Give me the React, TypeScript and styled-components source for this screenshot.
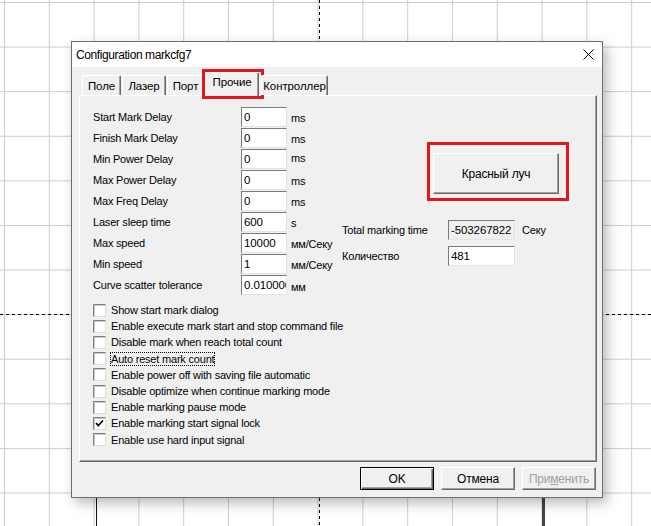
import React from "react";
import styled, { createGlobalStyle } from "styled-components";

const GlobalStyle = createGlobalStyle`
  html, body {
    margin: 0;
    padding: 0;
    background: #fff;
  }
  body {
    font-family: "Liberation Sans", Arial, sans-serif;
    font-size: 11px;
    letter-spacing: -0.2px;
    color: #000;
  }
`;

const Desktop = styled.div`
  position: relative;
  width: 651px;
  height: 526px;
  overflow: hidden;
  box-sizing: border-box;
  padding: 41px 0 0 71px;
  background-color: #fff;
  background-image: linear-gradient(to right, #cdcdcd 1px, transparent 1px),
    linear-gradient(to bottom, #cdcdcd 1px, transparent 1px);
  background-size: 44.8px 44.6px;
  background-position: 4px 2px;
`;

// guide lines drawn on the canvas behind the window
const DashV = styled.div`
  position: absolute;
  left: 319px;
  top: 0;
  width: 1px;
  height: 100%;
  background: repeating-linear-gradient(to bottom, #000 0 3px, transparent 3px 6px);
`;

const DashH = styled.div`
  position: absolute;
  left: 0;
  top: 314px;
  width: 100%;
  height: 1px;
  background: repeating-linear-gradient(to right, #000 0 3px, transparent 3px 6px);
`;

const Stroke = styled.div<{ $x: number; $w: number; $c: string }>`
  position: absolute;
  left: ${(p) => p.$x}px;
  top: 497px;
  width: ${(p) => p.$w}px;
  height: 29px;
  background: ${(p) => p.$c};
`;

const Dialog = styled.div`
  position: relative;
  z-index: 1;
  width: 532px;
  height: 457px;
  box-sizing: border-box;
  border: 1px solid #6e6e6e;
  background: #f0f0f0;
  box-shadow: 4px 5px 12px rgba(0, 0, 0, 0.28);
  display: flex;
  flex-direction: column;
`;

const TitleBar = styled.div`
  height: 25px;
  flex: none;
  background: #fff;
  display: flex;
  align-items: center;
  justify-content: space-between;
  padding: 0 8px 0 4px;
  font-size: 12px;
  letter-spacing: -0.4px;
`;

const Body = styled.div`
  flex: 1;
  display: flex;
  flex-direction: column;
  padding: 5px 5px 6px 7px;
`;

const TabStrip = styled.div`
  display: flex;
  align-items: flex-end;
  height: 23px;
  padding-left: 3px;
  position: relative;
  z-index: 2;
`;

const Tab = styled.div<{ $w: number; $active?: boolean }>`
  position: relative;
  box-sizing: border-box;
  width: ${(p) => p.$w}px;
  height: ${(p) => (p.$active ? 24 : 20)}px;
  margin-bottom: ${(p) => (p.$active ? -1 : 0)}px;
  margin-right: ${(p) => (p.$active ? 2 : 1)}px;
  background: #f0f0f0;
  border-top: 1px solid #fff;
  border-left: 1px solid #fff;
  border-right: 1px solid #696969;
  border-radius: 2px 2px 0 0;
  box-shadow: inset -1px 0 #a0a0a0;
  display: flex;
  align-items: ${(p) => (p.$active ? "flex-start" : "center")};
  padding-top: ${(p) => (p.$active ? 3 : 0)}px;
  justify-content: center;
  white-space: nowrap;
  font-size: 11.5px;
  letter-spacing: -0.1px;
`;

const TabMark = styled.div`
  position: absolute;
  left: -4px;
  right: -6px;
  top: -4px;
  bottom: -3px;
  border: 3px solid #e3161e;
  pointer-events: none;
`;

const Panel = styled.div`
  height: 367px;
  box-sizing: border-box;
  border-top: 1px solid #fff;
  border-left: 1px solid #fff;
  border-right: 1px solid #696969;
  border-bottom: 1px solid #696969;
  box-shadow: inset -1px -1px #a0a0a0;
  padding: 11px 0 0 13px;
`;

const TopSection = styled.div`
  display: flex;
`;

const FieldGrid = styled.div`
  width: 249px;
  flex: none;
  display: grid;
  grid-template-columns: 148px 46px 49px;
  grid-auto-rows: 21px;
`;

const FieldLabel = styled.div`
  align-self: center;
  white-space: nowrap;
  margin-top: -2px;
`;

const TextBox = styled.div<{ $readOnly?: boolean }>`
  height: 20px;
  box-sizing: border-box;
  border-top: 1px solid #7a7a7a;
  border-left: 1px solid #7a7a7a;
  border-right: 1px solid #e3e3e3;
  border-bottom: 1px solid #e3e3e3;
  background: ${(p) => (p.$readOnly ? "#f0f0f0" : "#fff")};
  padding: 0 0 0 2px;
  display: flex;
  align-items: center;
  overflow: hidden;
  white-space: nowrap;
  font-size: 11.5px;
  letter-spacing: -0.1px;
`;

const Unit = styled.div<{ $shift?: number }>`
  align-self: center;
  padding-left: 4px;
  white-space: nowrap;
  margin-top: ${(p) => p.$shift ?? 0}px;
`;

const RightSection = styled.div`
  display: flex;
  flex-direction: column;
`;

const RedFrame = styled.div`
  margin: 35px 0 0 85px;
  width: 142px;
  height: 59px;
  box-sizing: border-box;
  border: 3px solid #e3161e;
  padding: 8px 7px 4px 3px;
`;

const Button = styled.button<{ $w: number; $h: number; $default?: boolean }>`
  width: ${(p) => p.$w}px;
  height: ${(p) => p.$h}px;
  box-sizing: border-box;
  margin: 0;
  padding: 0;
  font-family: "Liberation Sans", Arial, sans-serif;
  font-size: 12px;
  letter-spacing: -0.2px;
  color: #000;
  background: #f0f0f0;
  border-style: solid;
  border-width: 1px;
  border-color: ${(p) => (p.$default ? "#000" : "#fff #696969 #696969 #fff")};
  box-shadow: ${(p) =>
    p.$default
      ? "inset 1px 1px #fff, inset -1px -1px #696969, inset -2px -2px #a0a0a0"
      : "inset -1px -1px #a0a0a0"};
  &:disabled {
    color: #a0a0a0;
  }
`;

const InfoGrid = styled.div`
  margin-top: 19px;
  display: grid;
  grid-template-columns: 106px 67px auto;
  grid-auto-rows: 20px;
  row-gap: 6px;
`;

const InfoLabel = styled.div`
  align-self: center;
  white-space: nowrap;
`;

const InfoUnit = styled.div`
  align-self: center;
  padding-left: 7px;
  white-space: nowrap;
`;

const CheckList = styled.div`
  margin-top: 6px;
  display: flex;
  flex-direction: column;
`;

const CheckRow = styled.div`
  height: 16.2px;
  display: flex;
  align-items: center;
`;

const Box = styled.span`
  width: 13px;
  height: 13px;
  box-sizing: border-box;
  flex: none;
  background: #fff;
  border-top: 1px solid #808080;
  border-left: 1px solid #808080;
  border-right: 1px solid #dcdcdc;
  border-bottom: 1px solid #dcdcdc;
  box-shadow: inset 1px 1px #c8c8c8;
  display: flex;
  align-items: center;
  justify-content: center;
`;

const CheckText = styled.span<{ $focused?: boolean }>`
  margin-left: 5px;
  white-space: nowrap;
  outline: ${(p) => (p.$focused ? "1px dotted #000" : "none")};
  outline-offset: 0;
  line-height: 12px;
`;

const Footer = styled.div`
  display: flex;
  justify-content: flex-end;
  gap: 7px;
  margin-top: 5px;
  padding-right: 1px;
`;

const Accel = styled.span`
  text-decoration: underline;
`;

const fields: { label: string; value: string; unit: string; shift?: number }[] = [
  { label: "Start Mark Delay", value: "0", unit: "ms", shift: 1 },
  { label: "Finish Mark Delay", value: "0", unit: "ms", shift: 1 },
  { label: "Min Power Delay", value: "0", unit: "ms", shift: -3 },
  { label: "Max Power Delay", value: "0", unit: "ms", shift: 1 },
  { label: "Max Freq Delay", value: "0", unit: "ms", shift: 1 },
  { label: "Laser sleep time", value: "600", unit: "s" },
  { label: "Max speed", value: "10000", unit: "мм/Секу" },
  { label: "Min speed", value: "1", unit: "мм/Секу" },
  { label: "Curve scatter tolerance", value: "0.010000", unit: "мм", shift: 3 },
];

const checks: { label: string; checked?: boolean; focused?: boolean }[] = [
  { label: "Show start mark dialog" },
  { label: "Enable execute mark start and stop command file" },
  { label: "Disable mark when reach total count" },
  { label: "Auto reset mark count", focused: true },
  { label: "Enable power off with saving file automatic" },
  { label: "Disable optimize when continue marking mode" },
  { label: "Enable marking pause mode" },
  { label: "Enable marking start signal lock", checked: true },
  { label: "Enable use hard input signal" },
];

const tabs = [
  { label: "Поле", w: 39 },
  { label: "Лазер", w: 44 },
  { label: "Порт", w: 37 },
  { label: "Прочие", w: 54, active: true },
  { label: "Контроллер", w: 67 },
];

const CloseIcon = () => (
  <svg width="11" height="11" viewBox="0 0 11 11">
    <path d="M0.5 0.5 L10.5 10.5 M10.5 0.5 L0.5 10.5" stroke="#000" strokeWidth="1" />
  </svg>
);

const CheckMark = () => (
  <svg width="9" height="9" viewBox="0 0 9 9">
    <path d="M1 4 L3.3 6.5 L8 1.5" stroke="#000" strokeWidth="1.8" fill="none" />
  </svg>
);

export default function App() {
  return (
    <>
      <GlobalStyle />
      <Desktop>
        <DashV />
        <DashH />
        <Stroke $x={96} $w={1} $c="#111" />
        <Stroke $x={542} $w={3} $c="#444" />
        <Dialog>
          <TitleBar>
            <span>Configuration markcfg7</span>
            <CloseIcon />
          </TitleBar>
          <Body>
            <TabStrip>
              {tabs.map((t) => (
                <Tab key={t.label} $w={t.w} $active={t.active}>
                  {t.label}
                  {t.active && <TabMark />}
                </Tab>
              ))}
            </TabStrip>
            <Panel>
              <TopSection>
                <FieldGrid>
                  {fields.map((f) => (
                    <React.Fragment key={f.label}>
                      <FieldLabel>{f.label}</FieldLabel>
                      <TextBox>{f.value}</TextBox>
                      <Unit $shift={f.shift}>{f.unit}</Unit>
                    </React.Fragment>
                  ))}
                </FieldGrid>
                <RightSection>
                  <RedFrame>
                    <Button $w={126} $h={41}>Красный луч</Button>
                  </RedFrame>
                  <InfoGrid>
                    <InfoLabel>Total marking time</InfoLabel>
                    <TextBox $readOnly>-503267822</TextBox>
                    <InfoUnit>Секу</InfoUnit>
                    <InfoLabel>Количество</InfoLabel>
                    <TextBox>481</TextBox>
                    <span />
                  </InfoGrid>
                </RightSection>
              </TopSection>
              <CheckList>
                {checks.map((c) => (
                  <CheckRow key={c.label}>
                    <Box>{c.checked && <CheckMark />}</Box>
                    <CheckText $focused={c.focused}>{c.label}</CheckText>
                  </CheckRow>
                ))}
              </CheckList>
            </Panel>
            <Footer>
              <Button $w={74} $h={23} $default>OK</Button>
              <Button $w={74} $h={23}>Отмена</Button>
              <Button $w={74} $h={23} disabled>
                При<Accel>м</Accel>енить
              </Button>
            </Footer>
          </Body>
        </Dialog>
      </Desktop>
    </>
  );
}
